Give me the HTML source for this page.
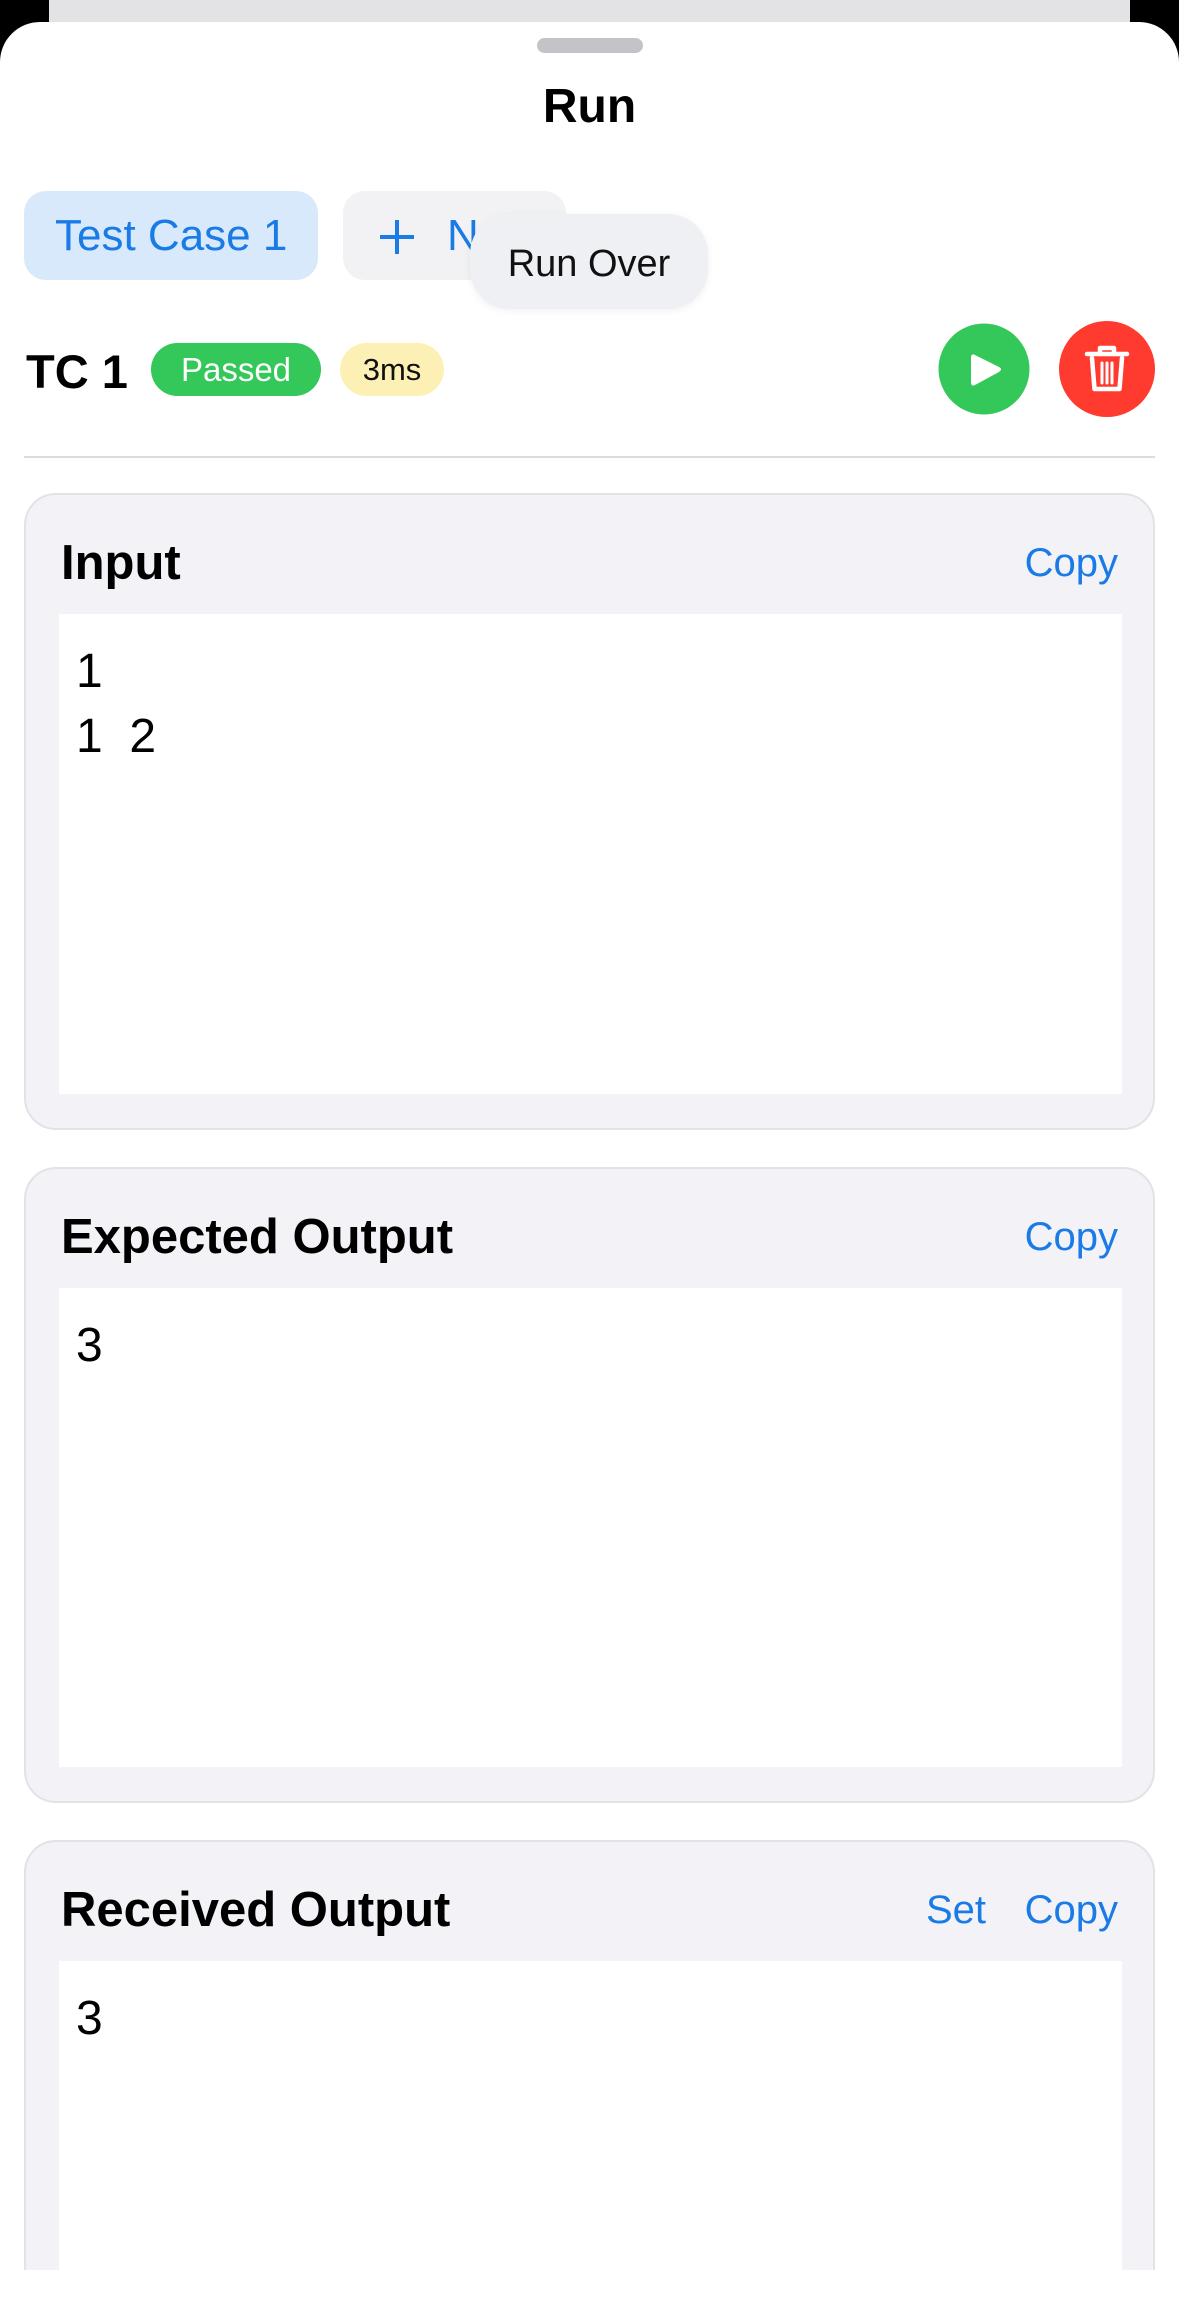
<!DOCTYPE html>
<html><head><meta charset="utf-8">
<style>
*{margin:0;padding:0;box-sizing:border-box}
html,body{width:1179px;height:2320px;overflow:hidden;background:#000;font-family:"Liberation Sans",sans-serif}
.abs{position:absolute}
#back{left:49px;top:0;width:1081px;height:60px;background:#e3e3e5;border-radius:0 0 30px 30px}
#sheet{left:0;top:22px;width:1179px;height:2298px;background:#fff;border-radius:40px 40px 0 0;overflow:hidden}
.grab{left:537px;top:16px;width:106px;height:15px;background:#c4c4c8;border-radius:8px}
.title{left:0;width:1179px;top:57px;text-align:center;font-size:48px;font-weight:bold;color:#000}
.chip{border-radius:22px;font-size:44px;line-height:89px;height:89px}
.tip{left:470px;top:192px;width:238px;height:95px;background:#eef0f4;border-radius:40px;font-size:38px;line-height:100px;text-align:center;color:#111;box-shadow:0 2px 8px rgba(0,0,0,.06)}
.pill{height:53px;line-height:53px;border-radius:27px;font-size:33px;text-align:center}
.card{left:24px;width:1131px;background:#f2f2f7;border:2px solid #e2e2e7;border-radius:32px}
.ch{position:absolute;left:35px;font-size:49px;font-weight:bold;color:#000}
.cp{position:absolute;font-size:40px;color:#1a7be6}
.ta{position:absolute;left:33px;width:1063px;background:#fff;font-size:48px;line-height:65px;padding:25px 0 0 17px;color:#000}
</style></head><body>
<div id="back" class="abs"></div>
<div id="sheet" class="abs">
  <div class="abs grab"></div>
  <div class="abs title">Run</div>
  <div class="abs chip" style="left:24px;top:169px;width:294px;background:#d7e9fb;color:#1a7be6;padding-left:31px">Test Case 1</div>
  <div class="abs chip" style="left:343px;top:169px;width:223px;background:#f2f2f4;color:#1a7be6;padding-left:104px">N</div>
  <svg class="abs" style="left:378px;top:196px" width="38" height="38" viewBox="0 0 38 38"><path d="M19 2V36M2 19H36" stroke="#1a7be6" stroke-width="4"/></svg>
  <div class="abs tip">Run Over</div>
  <div class="abs" style="left:26px;top:324px;font-size:47px;font-weight:bold;color:#000;line-height:52px">TC 1</div>
  <div class="abs pill" style="left:151px;top:321px;width:170px;background:#34c759;color:#fff">Passed</div>
  <div class="abs pill" style="left:340px;top:321px;width:104px;background:#fdf0b5;color:#111;font-size:31px">3ms</div>
  <svg class="abs" style="left:938px;top:301px" width="92" height="92" viewBox="0 0 92 92"><circle cx="46" cy="46" r="45.5" fill="#34c759"/><path d="M37 32 Q33 30 33 35 L33 59 Q33 64 37 62 L61 49 Q65 46 61 44 Z" fill="#fff"/></svg>
  <svg class="abs" style="left:1059px;top:299px" width="96" height="96" viewBox="0 0 96 96"><circle cx="48" cy="48" r="48" fill="#ff3b30"/>
   <g fill="none" stroke="#fff" stroke-width="4.5" stroke-linecap="round" stroke-linejoin="round"><path d="M28 33 H68"/><path d="M41 33 V27 H55 V33"/><path d="M33 37 L35.5 68 H60.5 L63 37"/><path d="M43 42 V62 M48 42 V62 M53 42 V62" stroke-width="3"/></g></svg>
  <div class="abs" style="left:24px;top:434px;width:1131px;height:2px;background:#dcdce0"></div>

  <div class="abs card" style="top:471px;height:637px">
    <div class="ch" style="top:40px">Input</div>
    <div class="cp" style="right:35px;top:46px">Copy</div>
    <div class="ta" style="top:119px;height:480px">1<br>1&nbsp;&nbsp;2</div>
  </div>
  <div class="abs card" style="top:1145px;height:636px">
    <div class="ch" style="top:40px">Expected Output</div>
    <div class="cp" style="right:35px;top:46px">Copy</div>
    <div class="ta" style="top:119px;height:479px">3</div>
  </div>
  <div class="abs card" style="top:1818px;height:430px;border-bottom:none;border-radius:32px 32px 0 0">
    <div class="ch" style="top:40px">Received Output</div>
    <div class="cp" style="right:167px;top:46px">Set</div>
    <div class="cp" style="right:35px;top:46px">Copy</div>
    <div class="ta" style="top:119px;height:311px">3</div>
  </div>
</div>
</body></html>
